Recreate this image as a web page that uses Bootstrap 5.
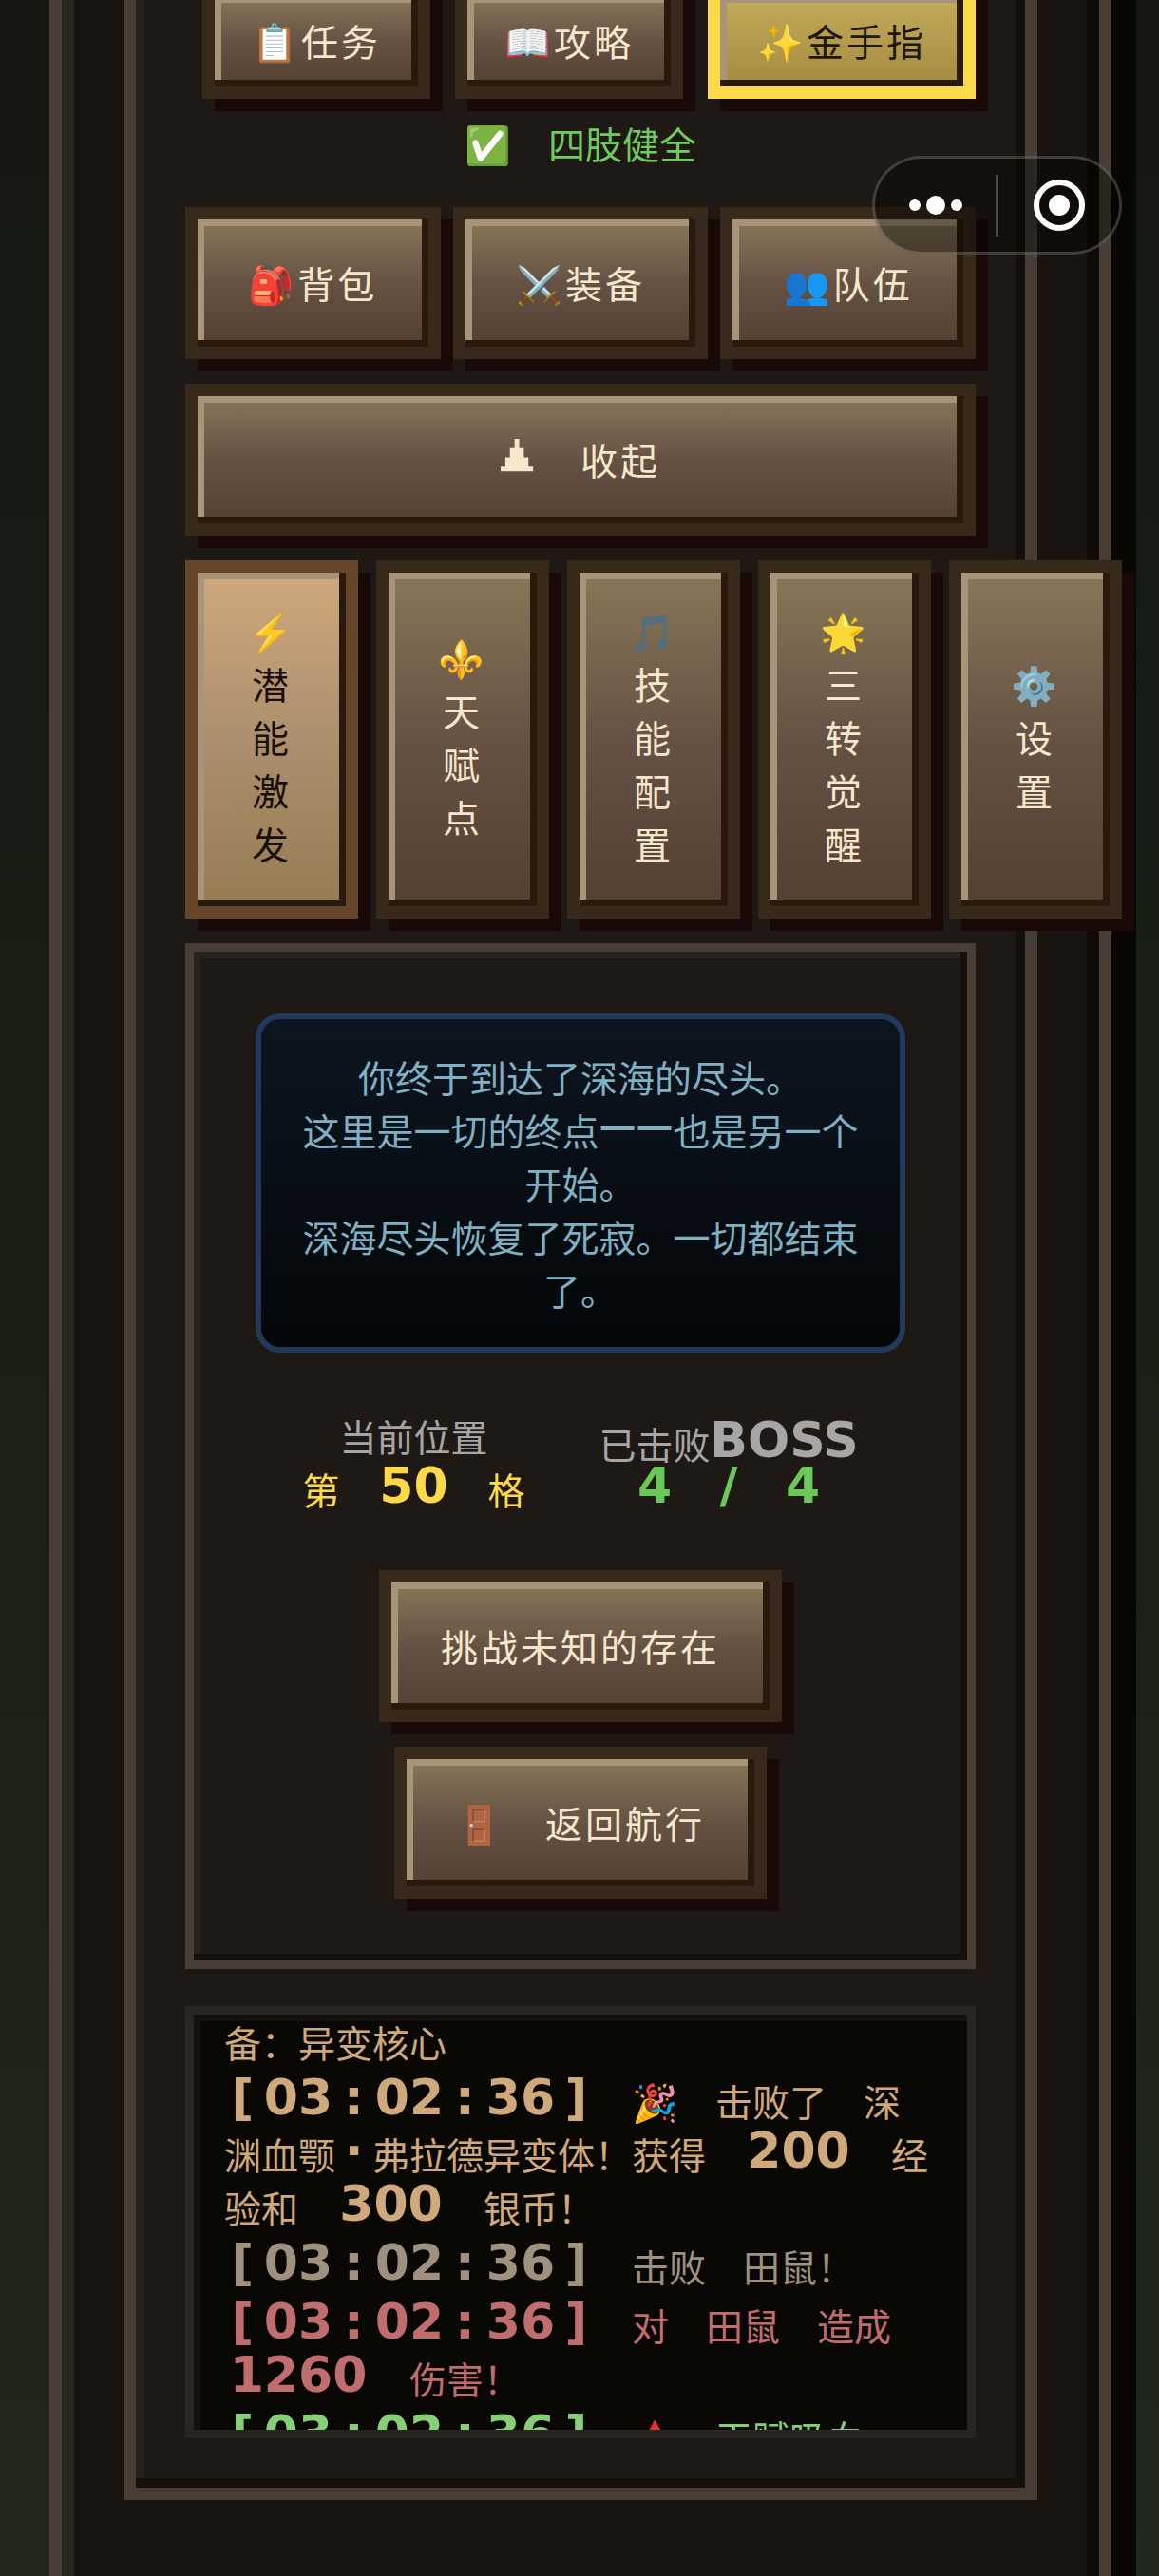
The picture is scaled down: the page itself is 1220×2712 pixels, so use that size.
<!DOCTYPE html>
<html lang="zh-CN">
<head>
<meta charset="utf-8">
<meta name="viewport" content="width=device-width, initial-scale=1">
<title>深海尽头</title>
<link rel="stylesheet" href="https://cdn.jsdelivr.net/npm/bootstrap@5.3.0/dist/css/bootstrap.min.css">
<style>
body{background:linear-gradient(#141811,#20271c);font-family:"Noto Sans CJK SC",sans-serif;font-size:39px;line-height:56px;color:#f5e8cc;min-height:100vh;overflow-x:hidden}
.frame{margin:0 50px 0 52px;padding:0 65px 80px;border:solid #483e35;border-width:0 13px;background:#1a1411;box-shadow:inset 13px 0 #2a2520,inset -13px 0 #100b08,26px 0 #090704}
.board{padding:0 52px 52px;border:13px solid #483e35;border-top:0;background:#1e1915;box-shadow:inset -10px -10px #14100b,inset 9px 0 #26221e}
.key{border:13px solid #382a1b;background:linear-gradient(#897759,#655244 50%,#544033);box-shadow:inset -7px -7px #2a1a0e,inset 7px 7px #a89478,13px 13px #190a09;color:#f5e8cc;padding:38px 52px 40px;letter-spacing:3px;line-height:56px}
.key-top{padding:18px 39px 21px}
.key-gold{border-color:#fbd949;background:linear-gradient(#c4ab5a,#a48a40);color:#1c170b}
.key-tall{width:182px;padding:32px 50px 39px}
.key-on{border-color:#66462a;background:linear-gradient(#cfa87d,#ac8f6d 50%,#957c52);color:#1a0f0a}
.row-top{margin-top:-17px;gap:26px}
.status{color:#72c960;margin:18px 0 40px}
.gap-s{gap:13px}.gap-m{gap:19px}.gap-l{gap:26px}
.below{margin-top:26px}
.scene{padding:65px;border:9px solid #483e35;box-shadow:inset -7px -7px #14100b,inset 7px 7px #26221e}
.story{padding:32px 39px 33px;border:6px solid #21395a;border-radius:26px;background:linear-gradient(#0d1520,#040709);color:#7fb0c3}
.dash{font-family:"DejaVu Sans",sans-serif;font-weight:700;line-height:39px;vertical-align:8px}
.stats{gap:78px;margin:59px 0 58px}
.label-low{height:56px}
.c-dim{color:#a6a6a6}.c-gold{color:#fbd949}.c-green{color:#6cc759}
.log{height:455px;margin-top:39px;padding:0 32px;border:9px solid #2a2520;background:#0a0805;box-shadow:inset 7px 7px #14100b;overflow:hidden}
.log p{margin:0 0 6px}
.l-loot{color:#cfa87b}.l-kill{color:#9e9180}.l-hit{color:#c06d6d}.l-heal{color:#86cf77}
.px{display:inline-flex;font-family:"DejaVu Sans",sans-serif;font-weight:700;font-size:52px;line-height:48px;vertical-align:2px}
.px>span{width:39px;text-align:center;flex:none;display:flex;justify-content:center}
.px>.w2{width:78px}.px>.w3{width:117px}.px>.w4{width:156px}
.tower{width:39px;height:39px;vertical-align:-1px;margin-right:3px}
.capsule{position:absolute;top:164px;right:39px;width:263px;height:104px;border:3px solid rgba(255,255,255,.2);border-radius:52px;background:rgba(0,0,0,.4)}
.capsule button{background:none;border:0;padding:0}
.capsule i{width:3px;height:65px;background:rgba(255,255,255,.22)}
</style>
</head>
<body>
<div class="frame">
 <main class="board">
  <div class="row-top d-flex justify-content-end">
   <button class="key key-top">📋任务</button><button class="key key-top">📖攻略</button><button class="key key-top key-gold">✨金手指</button>
  </div>
  <div class="status text-center">✅　四肢健全</div>
  <div class="d-flex gap-s">
   <button class="key flex-fill px-0">🎒背包</button><button class="key flex-fill px-0">⚔️装备</button><button class="key flex-fill px-0">👥队伍</button>
  </div>
  <div class="d-grid below"><button class="key"><svg class="tower" viewBox="0 0 8 8" fill="currentColor"><path d="M3 0h1v2h1v2h1v2h1v1H0V6h1V4h1V2h1z"/></svg>　收起</button></div>
  <div class="d-flex gap-m below">
   <button class="key key-tall key-on flex-shrink-0">⚡潜能激发</button><button class="key key-tall flex-shrink-0">⚜️天赋点</button><button class="key key-tall flex-shrink-0">🎵技能配置</button><button class="key key-tall flex-shrink-0">🌟三转觉醒</button><button class="key key-tall flex-shrink-0">⚙️设置</button>
  </div>
  <section class="scene below">
   <div class="story text-center">你终于到达了深海的尽头。<br>这里是一切的终点<span class="dash">——</span>也是另一个开始。<br>深海尽头恢复了死寂。一切都结束了。</div>
   <div class="stats d-flex justify-content-center text-center">
    <div><div class="c-dim">当前位置</div><div class="c-gold">第　<span class="px"><span class="w2">50</span></span>　格</div></div>
    <div><div class="c-dim label-low pt-2">已击败<span class="px"><span class="w4">BOSS</span></span></div><div class="c-green"><span class="px"><span>4</span></span>　<span class="px"><span>/</span></span>　<span class="px"><span>4</span></span></div></div>
   </div>
   <div class="d-flex flex-column align-items-center gap-l"><button class="key">挑战未知的存在</button><button class="key">🚪　返回航行</button></div>
  </section>
  <section class="log">
   <p class="l-loot">备：异变核心</p>
   <p class="l-loot"><span class="px"><span>[</span><span class="w2">03</span><span>:</span><span class="w2">02</span><span>:</span><span class="w2">36</span><span>]</span></span>　🎉　击败了　深渊血颚<span class="px"><span>·</span></span>弗拉德异变体！获得　<span class="px"><span class="w3">200</span></span>　经验和　<span class="px"><span class="w3">300</span></span>　银币！</p>
   <p class="l-kill"><span class="px"><span>[</span><span class="w2">03</span><span>:</span><span class="w2">02</span><span>:</span><span class="w2">36</span><span>]</span></span>　击败　田鼠！</p>
   <p class="l-hit"><span class="px"><span>[</span><span class="w2">03</span><span>:</span><span class="w2">02</span><span>:</span><span class="w2">36</span><span>]</span></span>　对　田鼠　造成<span class="px"><span class="w4">1260</span></span>　伤害！</p>
   <p class="l-heal"><span class="px"><span>[</span><span class="w2">03</span><span>:</span><span class="w2">02</span><span>:</span><span class="w2">36</span><span>]</span></span>　🩸　天赋吸血</p>
  </section>
 </main>
</div>
<div class="capsule d-flex align-items-center">
 <button class="flex-fill" aria-label="更多"><svg width="56" height="22" viewBox="2 0 56 22" fill="#fff" class="d-block mx-auto"><circle cx="8" cy="11" r="6"/><circle cx="30" cy="11" r="10"/><circle cx="52" cy="11" r="6"/></svg></button><i></i>
 <button class="flex-fill" aria-label="关闭"><svg width="56" height="56" viewBox="0 0 56 56" class="d-block mx-auto"><circle cx="28" cy="28" r="24" fill="none" stroke="#fff" stroke-width="6"/><circle cx="28" cy="28" r="11" fill="#fff"/></svg></button>
</div>
<script src="https://cdn.jsdelivr.net/npm/bootstrap@5.3.0/dist/js/bootstrap.bundle.min.js"></script>
</body>
</html>
